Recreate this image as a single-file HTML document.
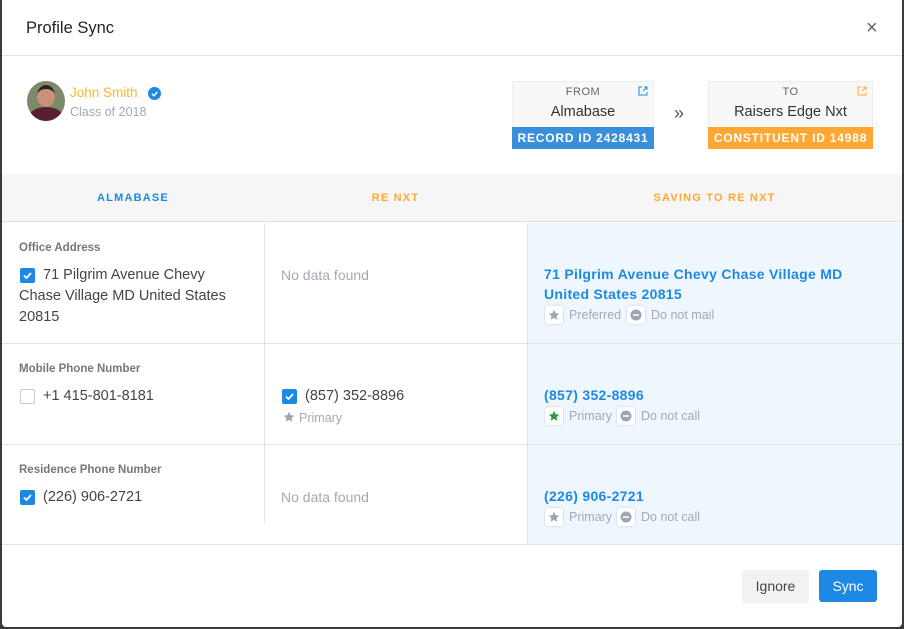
<!DOCTYPE html>
<html><head><style>
*{box-sizing:border-box;margin:0;padding:0}
body{width:904px;height:629px;background:#3a3a3a;font-family:"Liberation Sans",sans-serif;position:relative;overflow:hidden}
.m{position:absolute;left:2px;top:0;width:900px;height:627px;background:#fff;border-radius:0 0 4px 4px}
.a{position:absolute;white-space:nowrap}
.hd{font-size:11px;font-weight:bold;letter-spacing:1.2px}
.lbl{font-size:11.5px;font-weight:bold;color:#777}
.v{font-size:14.5px;color:#444}
.nd{font-size:14px;color:#a3a9b5}
.cb{position:absolute;width:15px;height:15px;border-radius:2px;background:#1e88e5}
.cb svg{position:absolute;left:2px;top:2px}
.cbo{position:absolute;width:15px;height:15px;border-radius:2px;border:1px solid #ccc;background:#fff}
.bl{font-size:14px;font-weight:bold;color:#1e88e5;line-height:20px;letter-spacing:.3px}
.tg{position:absolute;width:18px;height:18px;border-radius:3px;background:#fff;box-shadow:0 0 2px rgba(0,0,0,.2)}
.tg svg{position:absolute;left:3px;top:3px}
.tt{font-size:12.5px;color:#a3a9b5}
</style></head><body>
<div class="m">
<div class="a" style="left:24px;top:19px;font-size:16.5px;color:#222">Profile Sync</div>
<div class="a" style="left:864px;top:17px;font-size:20px;color:#666">×</div>
<div class="a" style="left:0;top:55px;width:900px;height:1px;background:#e3e3e3"></div>

<div class="a" style="left:25px;top:81px;width:38px;height:40px;border-radius:50%;overflow:hidden;background:#7d8a6a">
<div class="a" style="left:10px;top:4px;width:18px;height:22px;border-radius:50%;background:#c99278;border-top:4px solid #2b211c"></div>
<div class="a" style="left:2px;top:26px;width:34px;height:20px;border-radius:50% 50% 0 0;background:#5a1f2e"></div>
</div>
<div class="a" style="left:68px;top:85px;font-size:13.5px;color:#fbb829">John Smith</div>
<svg class="a" style="left:146px;top:87px" width="13" height="13"><circle cx="6.5" cy="6.5" r="6.5" fill="#1e88e5"/><path d="M3.8 6.7l2 2 3.5-3.7" stroke="#fff" stroke-width="1.4" fill="none"/></svg>
<div class="a" style="left:68px;top:105px;font-size:12.5px;color:#a3a9b5">Class of 2018</div>

<div class="a" style="left:510px;top:81px;width:142px;height:48px;background:#f8f8f8;border:1px solid #eee"></div>
<div class="a" style="left:510px;top:86px;width:142px;text-align:center;font-size:11px;color:#666;letter-spacing:.5px">FROM</div>
<div class="a" style="left:510px;top:104px;width:142px;text-align:center;font-size:14.5px;color:#333">Almabase</div>
<svg class="a" style="left:636px;top:86px" width="10" height="10"><path d="M4 1H1v8h8V6M5 5l4-4M6 1h3v3" stroke="#1e88e5" fill="none"/></svg>
<div class="a" style="left:510px;top:127px;width:142px;height:22px;background:#3a8fdd;color:#fff;font-size:12px;font-weight:bold;text-align:center;line-height:22px;letter-spacing:.8px">RECORD ID 2428431</div>
<div class="a" style="left:672px;top:103px;font-size:18px;color:#555">»</div>
<div class="a" style="left:706px;top:81px;width:165px;height:48px;background:#f8f8f8;border:1px solid #eee"></div>
<div class="a" style="left:706px;top:86px;width:165px;text-align:center;font-size:11px;color:#666;letter-spacing:.5px">TO</div>
<div class="a" style="left:706px;top:104px;width:165px;text-align:center;font-size:14.5px;color:#333">Raisers Edge Nxt</div>
<svg class="a" style="left:855px;top:86px" width="10" height="10"><path d="M4 1H1v8h8V6M5 5l4-4M6 1h3v3" stroke="#ffa733" fill="none"/></svg>
<div class="a" style="left:706px;top:127px;width:165px;height:22px;background:#ffa733;color:#fff;font-size:12px;font-weight:bold;text-align:center;line-height:22px;letter-spacing:.8px">CONSTITUENT ID 14988</div>

<div class="a" style="left:0;top:174px;width:900px;height:48px;background:#f6f6f6;border-bottom:1px solid #e0e0e0"></div>
<div class="a hd" style="left:0;top:192px;width:262px;text-align:center;color:#1e88e5">ALMABASE</div>
<div class="a hd" style="left:262px;top:192px;width:263px;text-align:center;color:#ffa733">RE NXT</div>
<div class="a hd" style="left:525px;top:192px;width:375px;text-align:center;color:#ffa733">SAVING TO RE NXT</div>

<div class="a" style="left:525px;top:223px;width:375px;height:321px;background:#eff7fe"></div>
<div class="a" style="left:262px;top:223px;width:1px;height:300px;background:#e3e3e3"></div>
<div class="a" style="left:525px;top:223px;width:1px;height:321px;background:#e3e3e3"></div>
<div class="a" style="left:0;top:343px;width:900px;height:1px;background:#e3e3e3"></div>
<div class="a" style="left:0;top:444px;width:900px;height:1px;background:#e3e3e3"></div>
<div class="a" style="left:0;top:544px;width:900px;height:1px;background:#e3e3e3"></div>

<!-- row1 -->
<div class="a lbl" style="left:17px;top:242px">Office Address</div>
<div class="cb" style="left:18px;top:268px"><svg width="11" height="11"><path d="M2 5.5l2.5 2.5 4.5-5" stroke="#fff" stroke-width="1.8" fill="none"/></svg></div>
<div class="a v" style="left:17px;top:265px;white-space:normal;width:222px;line-height:21px;text-indent:24px">71 Pilgrim Avenue Chevy Chase Village MD United States 20815</div>
<div class="a nd" style="left:279px;top:267px">No data found</div>
<div class="a bl" style="left:542px;top:264px;width:320px;white-space:normal">71 Pilgrim Avenue Chevy Chase Village MD United States 20815</div>
<div class="tg" style="left:543px;top:306px"><svg width="12" height="12"><path d="M6 .8l1.6 3.4 3.6.4-2.7 2.5.8 3.6L6 8.9 2.7 10.7l.8-3.6L.8 4.6l3.6-.4z" fill="#9ea4b0"/></svg></div>
<div class="a tt" style="left:567px;top:308px">Preferred</div>
<div class="tg" style="left:625px;top:306px"><svg width="12" height="12"><circle cx="6" cy="6" r="5.5" fill="#9ea4b0"/><rect x="3" y="5.2" width="6" height="1.6" fill="#fff"/></svg></div>
<div class="a tt" style="left:649px;top:308px">Do not mail</div>

<!-- row2 -->
<div class="a lbl" style="left:17px;top:363px">Mobile Phone Number</div>
<div class="cbo" style="left:18px;top:389px"></div>
<div class="a v" style="left:41px;top:388px">+1 415-801-8181</div>
<div class="cb" style="left:280px;top:389px"><svg width="11" height="11"><path d="M2 5.5l2.5 2.5 4.5-5" stroke="#fff" stroke-width="1.8" fill="none"/></svg></div>
<div class="a v" style="left:303px;top:388px">(857) 352-8896</div>
<svg class="a" style="left:281px;top:411px" width="12" height="12"><path d="M6 .8l1.6 3.4 3.6.4-2.7 2.5.8 3.6L6 8.9 2.7 10.7l.8-3.6L.8 4.6l3.6-.4z" fill="#9ea4b0"/></svg>
<div class="a tt" style="left:297px;top:411px">Primary</div>
<div class="a bl" style="left:542px;top:385px">(857) 352-8896</div>
<div class="tg" style="left:543px;top:407px"><svg width="12" height="12"><path d="M6 .8l1.6 3.4 3.6.4-2.7 2.5.8 3.6L6 8.9 2.7 10.7l.8-3.6L.8 4.6l3.6-.4z" fill="#2e9d3a"/></svg></div>
<div class="a tt" style="left:567px;top:409px">Primary</div>
<div class="tg" style="left:615px;top:407px"><svg width="12" height="12"><circle cx="6" cy="6" r="5.5" fill="#9ea4b0"/><rect x="3" y="5.2" width="6" height="1.6" fill="#fff"/></svg></div>
<div class="a tt" style="left:639px;top:409px">Do not call</div>

<!-- row3 -->
<div class="a lbl" style="left:17px;top:464px">Residence Phone Number</div>
<div class="cb" style="left:18px;top:490px"><svg width="11" height="11"><path d="M2 5.5l2.5 2.5 4.5-5" stroke="#fff" stroke-width="1.8" fill="none"/></svg></div>
<div class="a v" style="left:41px;top:489px">(226) 906-2721</div>
<div class="a nd" style="left:279px;top:489px">No data found</div>
<div class="a bl" style="left:542px;top:486px">(226) 906-2721</div>
<div class="tg" style="left:543px;top:508px"><svg width="12" height="12"><path d="M6 .8l1.6 3.4 3.6.4-2.7 2.5.8 3.6L6 8.9 2.7 10.7l.8-3.6L.8 4.6l3.6-.4z" fill="#9ea4b0"/></svg></div>
<div class="a tt" style="left:567px;top:510px">Primary</div>
<div class="tg" style="left:615px;top:508px"><svg width="12" height="12"><circle cx="6" cy="6" r="5.5" fill="#9ea4b0"/><rect x="3" y="5.2" width="6" height="1.6" fill="#fff"/></svg></div>
<div class="a tt" style="left:639px;top:510px">Do not call</div>

<div class="a" style="left:740px;top:570px;width:67px;height:33px;background:#f1f2f4;border-radius:3px;font-size:14px;color:#444;text-align:center;line-height:33px">Ignore</div>
<div class="a" style="left:817px;top:570px;width:58px;height:32px;background:#1e88e5;border-radius:3px;font-size:14px;color:#fff;text-align:center;line-height:32px">Sync</div>
</div>
</body></html>
